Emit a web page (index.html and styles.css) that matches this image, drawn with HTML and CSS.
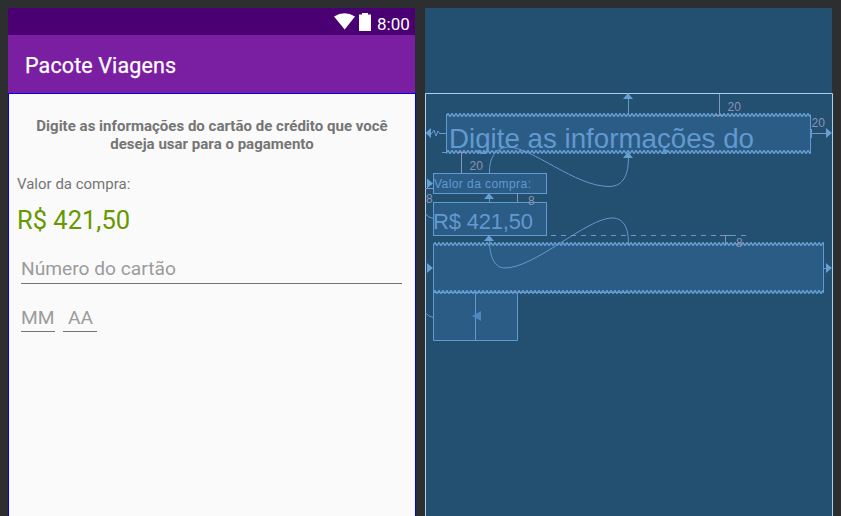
FILE: index.html
```html
<!DOCTYPE html>
<html lang="pt-BR">
<head>
<meta charset="utf-8">
<title>Pacote Viagens</title>
<link rel="stylesheet" href="styles.css">
</head>
<body>
<main class="editor">
  <section class="phone">
    <div class="status">
      <svg class="wifi" width="22" height="17" viewBox="0 0 22 17"><path d="M0 3.5Q10.5-3 21 3.5L10.7 16.5Z"/></svg>
      <svg class="battery" width="12" height="18" viewBox="0 0 12 18"><path d="M0 1.5H3V0H9V1.5H12V18H0Z"/></svg>
      <span class="clock">8:00</span>
    </div>
    <header class="appbar"><h1>Pacote Viagens</h1></header>
    <div class="content">
      <p class="intro"><span>Digite as informações do cartão de crédito que você</span><br><span>deseja usar para o pagamento</span></p>
      <p class="label">Valor da compra:</p>
      <p class="price">R$ 421,50</p>
      <div class="field number">Número do cartão</div>
      <div class="dates">
        <div class="field month">MM</div>
        <div class="field year">AA</div>
      </div>
    </div>
  </section>
  <section class="blueprint">
    <svg width="408" height="508" viewBox="425 8 408 508">
      <defs>
        <pattern id="zig" width="4" height="4" patternUnits="userSpaceOnUse" x="446" y="113">
          <path class="zig" d="M-1 2L0 3.5L2 .5L4 3.5L5 2"/>
        </pattern>
        <pattern id="zig2" width="4" height="4" patternUnits="userSpaceOnUse" x="446" y="150">
          <path class="zig" d="M-1 2L0 3.5L2 .5L4 3.5L5 2"/>
        </pattern>
        <pattern id="zig3" width="4" height="4" patternUnits="userSpaceOnUse" x="433" y="242">
          <path class="zig" d="M-1 2L0 3.5L2 .5L4 3.5L5 2"/>
        </pattern>
      </defs>
      <path class="frame" d="M425.5 516V93.5H832.5V516"/>

      <path class="fill" d="M447 115H810V152H447ZM434 174H546V193H434ZM434 203H546V235H434ZM434 244H823V293H434ZM434 293H517V340H434Z"/>
      <g class="edge">
        <path d="M446.5 114V153M810.5 115V153"/>
        <rect x="433.5" y="173.5" width="113" height="20"/>
        <rect x="433.5" y="202.5" width="113" height="33"/>
        <path d="M433.5 244V340.5H517.5V292.5M475.5 292V340M823.5 244V293M433 292.5H629"/>
      </g>
      <rect x="446" y="113" width="365" height="4" fill="url(#zig)"/>
      <rect x="446" y="150" width="365" height="4" fill="url(#zig2)"/>
      <rect x="433" y="242" width="391" height="4" fill="url(#zig3)"/>
      <rect x="433" y="290" width="391" height="4" fill="url(#zig3)"/>

      <text class="big" x="449" y="147.5" textLength="305" lengthAdjust="spacingAndGlyphs">Digite as informações do</text>
      <text class="small" x="434" y="188" textLength="97" lengthAdjust="spacing">Valor da compra:</text>
      <text class="medium" x="433" y="229" textLength="100" lengthAdjust="spacing">R$ 421,50</text>

      <g class="link">
        <path d="M628.5 98V114M489.5 198V203M442 152.5H447"/>
        <path d="M430 133.5H432L434 130L436 136L438 131L439.500 133.500H446M811 133.500H827M811.500 129V138M824 268.500H827"/>
        <path d="M489.500 173C489 158 495 148 508 147C532 147 575 186.500 609 186.500C624 186.500 628.500 174 628.500 157"/>
        <path d="M628.500 244C628.500 230 625 218 612 218C587 218 535 268 505 268C492 268 489.500 251 489.500 241"/>
        <path d="M425.500 214Q429 218 433.500 218.500M425.500 313Q429 317 433.500 317.500"/>
        <path class="dash" d="M551 235.500H747"/>
      </g>
      <path class="arrow" d="M628 93L633 99H623ZM628 152L633 158H623ZM489 193L494 199H484ZM489 235L494 241H484ZM425.500 133L431 128V138ZM832 133L826 128V138ZM433 183.500L427 178.500V188.500ZM433 268L427 263V273ZM832 268L826 263V273Z"/>
      <path class="arrow dim" d="M472 316L481 311V321Z"/>
      <g class="margin">
        <path d="M719.500 94V115M715 115.500H724M461.500 153V173M457 152.500H467M517.500 194V202M425 188.500H433M720 235.500H731M725.500 236V244M816 133.500H826"/>
        <text x="727.500" y="111">20</text>
        <text x="811.500" y="127">20</text>
        <text x="469.500" y="170">20</text>
        <text x="528" y="205">8</text>
        <text x="426" y="203">8</text>
        <text x="736" y="247">8</text>
      </g>
    </svg>
  </section>
</main>
</body>
</html>
```

FILE: styles.css
```css
* { box-sizing: border-box; }
body { margin: 0; background: #2d2e2f; font-family: Roboto, "Liberation Sans", sans-serif; overflow: hidden; }
p, h1 { margin: 0; font-weight: 400; }
svg { display: block; }
.editor { display: flex; gap: 9px; height: 516px; padding: 8px 8px 0; }
.phone { width: 408px; flex: none; display: flex; flex-direction: column; }
.status { height: 27px; width: 407px; background: #4a0072; display: flex; justify-content: flex-end; padding: 5px 5px 0 0; color: #fff; }
.wifi, .battery { fill: #fff; }
.battery { margin: 0 6px 0 3px; }
.clock { font-size: 17px; line-height: 22px; width: 33px; white-space: nowrap; }
.appbar { height: 58px; width: 407px; background: #7b1fa2; padding-left: 17px; color: #fff; }
.appbar h1 { font-size: 21.5px; font-weight: 400; line-height: 61px; letter-spacing: .12px; -webkit-text-stroke: .25px #fff; }
.content { flex: 1; border: 1px solid #0000e8; border-bottom: 0; background: #fafafa; padding: 23px 7px 0; color: #757575; }
.intro { text-align: center; font-size: 15px; line-height: 18px; font-weight: 700; letter-spacing: .02px; white-space: nowrap; }
.label { margin-top: 22px; padding-left: 1px; font-size: 15px; line-height: 18px; }
.price { margin-top: 10px; padding-left: 1px; font-size: 25.5px; line-height: 34px; color: #669900; }
.field { color: #9c9c9c; font-size: 19.2px; line-height: 27px; border-bottom: 1px solid #757575; white-space: nowrap; }
.number { margin: 18px 5px 0; width: 381px; height: 29px; }
.dates { display: flex; gap: 8px; margin: 19px 0 0 5px; }
.dates .field { width: 34px; height: 29px; line-height: 29px; }
.dates .year { padding-left: 5px; }
.blueprint { width: 408px; height: 508px; flex: none; background: linear-gradient(90deg, #234f70 407px, #2d2e2f 407px); font-family: "Liberation Sans", sans-serif; }
.blueprint text { fill: #6299d0; }
.frame { fill: none; stroke: #a8d0ef; }
.fill { fill: #2b5c85; }
.edge, .link, .zig { fill: none; stroke: #6299cf; }
.zig { stroke: #659dd2; stroke-width: 1.4; }
.dash { stroke-dasharray: 5 5; }
.arrow { fill: #659fd6; }
.dim { fill: #4e87bd; }
.blueprint .big { font-size: 28px; }
.blueprint .medium { font-size: 22px; }
.blueprint .small { font-size: 12px; }
.margin path { fill: none; stroke: #8895b9; }
.blueprint .margin text { fill: #8993b5; font-size: 12px; }
```
